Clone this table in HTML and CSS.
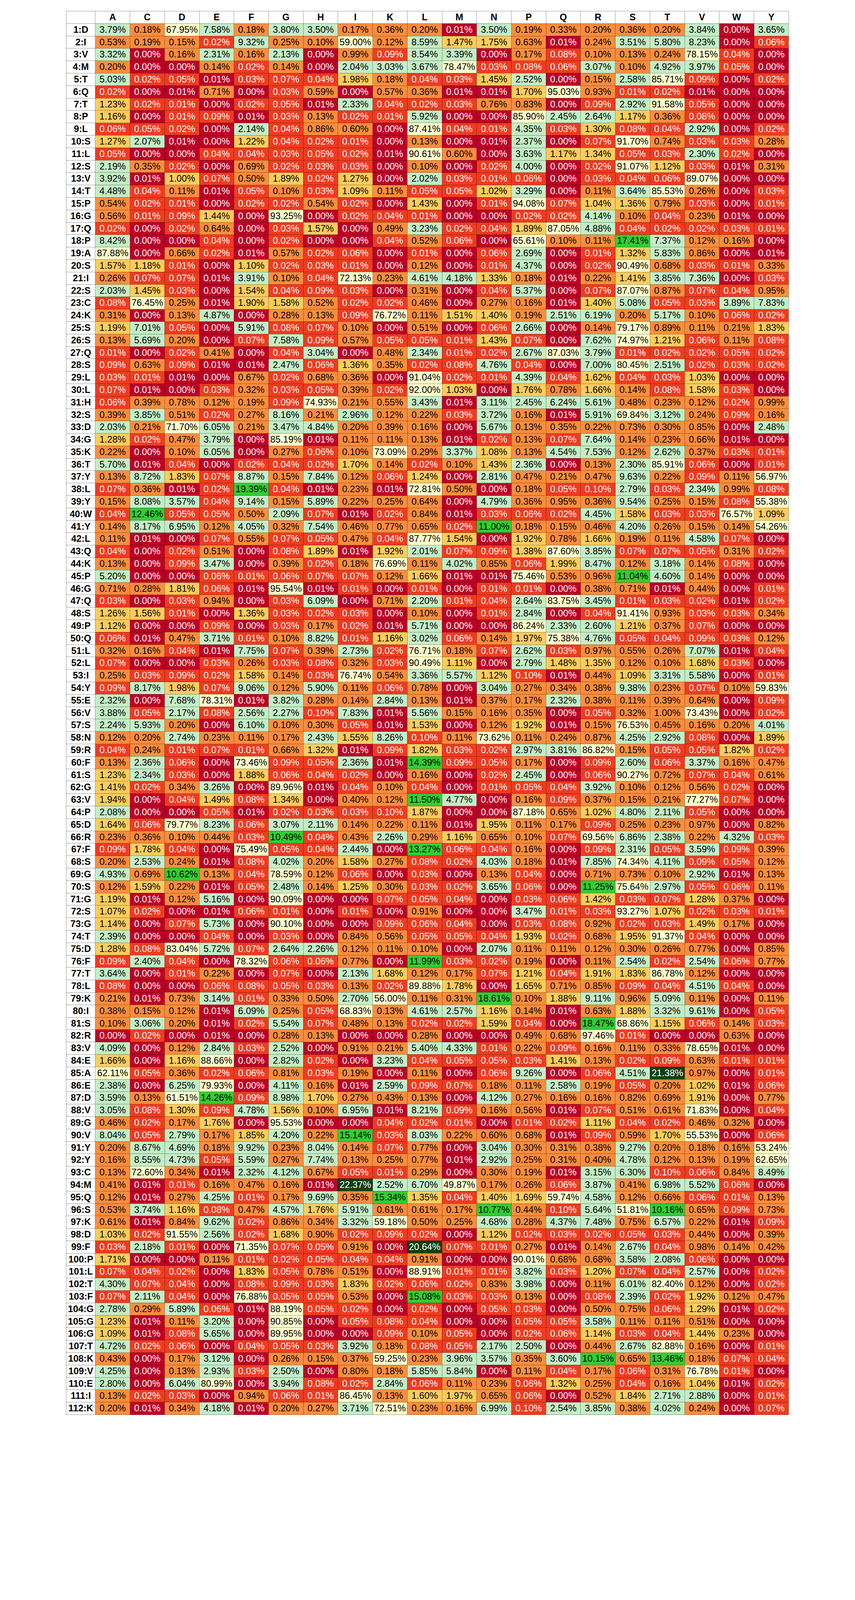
FILE: index.html
```html
<!DOCTYPE html>
<html lang="en">
<head>
<meta charset="utf-8">
<title>Residue substitution frequencies</title>
<link rel="stylesheet" href="styles.css">
</head>
<body>
<main class="page">
  <table class="matrix">
    <thead>
      <tr>
        <th class="corner"></th>
        <th>A</th><th>C</th><th>D</th><th>E</th><th>F</th><th>G</th><th>H</th><th>I</th><th>K</th><th>L</th>
        <th>M</th><th>N</th><th>P</th><th>Q</th><th>R</th><th>S</th><th>T</th><th>V</th><th>W</th><th>Y</th>
      </tr>
    </thead>
    <tbody id="rows"></tbody>
  </table>
</main>
<script src="script.js"></script>
</body>
</html>
```

FILE: styles.css
```css
html, body {
  margin: 0;
  padding: 0;
  background: #ffffff;
}

.page {
  padding: 28px 0 40px;
  font-family: "Liberation Sans", Arial, "DejaVu Sans", sans-serif;
  color: #000;
}

.matrix {
  border-collapse: collapse;
  margin: 0 auto;
  font-size: 23.8px;
  background: #ffffff;
}

.matrix th,
.matrix td {
  border: 1px solid rgba(0, 0, 0, 0.42);
  padding: 0 3.5px;
  line-height: 30.8px;
  text-align: center;
  white-space: nowrap;
}

.matrix th {
  font-weight: bold;
  background: #ffffff;
}

.matrix td.c0 { background: #bd0026; color: #ffffff; }
.matrix td.c1 { background: #f03b20; color: #ffffff; }
.matrix td.c2 { background: #fd8d3c; color: #000000; }
.matrix td.c3 { background: #fecc5c; color: #000000; }
.matrix td.c4 { background: #c3edc5; color: #000000; }
.matrix td.c5 { background: #32cd32; color: #000000; }
.matrix td.c6 { background: #10400f; color: #ffffff; }
.matrix td.cw { background: #ffffcc; color: #000000; }
```

FILE: script.js
```js
(function () {
  var cols = "ACDEFGHIKLMNPQRSTVWY".split("");
  var data = [
"1:D 3.79 0.18 67.95 7.58 0.18 3.80 3.50 0.17 0.36 0.20 0.01* 3.50 0.19 0.33 0.20 0.36 0.20 3.84 0.00 3.65",
"2:I 0.53 0.19 0.15 0.02 9.32 0.25 0.10 59.00 0.12 8.59 1.47 1.75 0.63 0.01* 0.24 3.51 5.80 8.23 0.00 0.06",
"3:V 3.32 0.00 0.16 2.31 0.16 2.13 0.00 0.99 0.09 8.54 3.39 0.00 0.17 0.08 0.10 0.13 0.24 78.15 0.04 0.00",
"4:M 0.20 0.00 0.00 0.14 0.02 0.14 0.00 2.04 3.03 3.67 78.47 0.03 0.08 0.06 3.07 0.10 4.92 3.97 0.05 0.00",
"5:T 5.03 0.02 0.05 0.01* 0.03 0.07 0.04 1.98 0.18 0.04 0.03 1.45 2.52 0.00 0.15 2.58 85.71 0.09 0.00 0.02",
"6:Q 0.02 0.00 0.01* 0.71 0.00 0.03 0.59 0.00 0.57 0.36 0.01* 0.01* 1.70 95.03 0.93 0.01 0.02 0.01* 0.00 0.00",
"7:T 1.23 0.02 0.01 0.00 0.02 0.05 0.01* 2.33 0.04 0.02 0.03 0.76 0.83 0.00 0.09 2.92 91.58 0.05 0.00 0.00",
"8:P 1.16 0.00 0.01 0.09 0.01* 0.03 0.13 0.02 0.01 5.92 0.00 0.00 85.90 2.45 2.64 1.17 0.36 0.08 0.00 0.00",
"9:L 0.06 0.05 0.02 0.00 2.14 0.04 0.86 0.60 0.00 87.41 0.04 0.01 4.35 0.03 1.30 0.08 0.04 2.92 0.00 0.02",
"10:S 1.27 2.07 0.01* 0.00 1.22 0.04 0.02 0.01 0.00 0.13 0.00 0.01* 2.37 0.00 0.07 91.70 0.74 0.03 0.03 0.28",
"11:L 0.05 0.00 0.00 0.04 0.04 0.03 0.05 0.02 0.01* 90.61 0.60 0.00 3.63 1.17 1.34 0.05 0.03 2.30 0.02 0.00",
"12:S 2.19 0.35 0.02 0.00 0.69 0.02 0.03 0.03 0.00 0.10 0.00 0.02 4.00 0.00 0.02 91.07 1.12 0.03 0.01* 0.31",
"13:V 3.92 0.01* 1.00 0.07 0.50 1.89 0.02 1.27 0.00 2.02 0.03 0.01 0.06 0.00 0.03 0.04 0.06 89.07 0.00 0.00",
"14:T 4.48 0.04 0.11 0.01* 0.05 0.10 0.03 1.09 0.11 0.05 0.05 1.02 3.29 0.00 0.11 3.64 85.53 0.26 0.00 0.03",
"15:P 0.54 0.02 0.01 0.00 0.02 0.02 0.54 0.02 0.00 1.43 0.00 0.01 94.08 0.07 1.04 1.36 0.79 0.03 0.00 0.01",
"16:G 0.56 0.01 0.09 1.44 0.00 93.25 0.00 0.02 0.04 0.01 0.00 0.00 0.02 0.02 4.14 0.10 0.04 0.23 0.01* 0.00",
"17:Q 0.02 0.00 0.02 0.64 0.00 0.03 1.57 0.00 0.49 3.23 0.02 0.04 1.89 87.05 4.88 0.04 0.02 0.02 0.03 0.01",
"18:P 8.42 0.00 0.00 0.04 0.00 0.02 0.00 0.00 0.04 0.52 0.06 0.00 65.61 0.10 0.11 17.41 7.37 0.12 0.16 0.00",
"19:A 87.88 0.00 0.66 0.02 0.01* 0.57 0.02 0.06 0.00 0.01 0.00 0.06 2.69 0.00 0.01 1.32 5.83 0.86 0.00 0.01*",
"20:S 1.57 1.18 0.01 0.00 1.10 0.02 0.03 0.01 0.00 0.12 0.00 0.01 4.37 0.00 0.02 90.49 0.68 0.03 0.01 0.33",
"21:I 0.26 0.07 0.07 0.01* 3.91 0.10 0.04 72.13 0.23 4.61 4.18 1.33 0.18 0.01* 0.22 1.41 3.85 7.36 0.00 0.03",
"22:S 2.03 1.45 0.03 0.00 1.54 0.04 0.09 0.03 0.00 0.31 0.00 0.04 5.37 0.00 0.07 87.07 0.87 0.07 0.04 0.95",
"23:C 0.08 76.45 0.25 0.01* 1.90 1.58 0.52 0.02 0.02 0.46 0.00 0.27 0.16 0.01* 1.40 5.08 0.05 0.03 3.89 7.83",
"24:K 0.31 0.00 0.13 4.87 0.00 0.28 0.13 0.09 76.72 0.11 1.51 1.40 0.19 2.51 6.19 0.20 5.17 0.10 0.06 0.02",
"25:S 1.19 7.01 0.05 0.00 5.91 0.08 0.07 0.10 0.00 0.51 0.00 0.06 2.66 0.00 0.14 79.17 0.89 0.11 0.21 1.83",
"26:S 0.13 5.69 0.20 0.00 0.07 7.58 0.09 0.57 0.05 0.05 0.01 1.43 0.07 0.00 7.62 74.97 1.21 0.06 0.11 0.08",
"27:Q 0.01 0.00 0.02 0.41 0.00 0.04 3.04 0.00 0.48 2.34 0.01 0.02 2.67 87.03 3.79 0.01 0.02 0.02 0.05 0.02",
"28:S 0.09 0.63 0.09 0.01* 0.01* 2.47 0.06 1.36 0.35 0.02 0.08 4.76 0.04 0.00 7.00 80.45 2.51 0.02 0.03 0.02",
"29:L 0.03 0.01 0.01* 0.00 0.67 0.02 0.68 0.36 0.00 91.04 0.02 0.01 4.39 0.04 1.62 0.04 0.03 1.03 0.00 0.00",
"30:L 0.07 0.01* 0.00 0.03 0.32 0.03 0.05 0.39 0.02 92.00 1.03 0.00 1.76 0.78 1.66 0.14 0.08 1.58 0.03 0.00",
"31:H 0.06 0.39 0.78 0.12 0.19 0.09 74.93 0.21 0.55 3.43 0.01* 3.11 2.45 6.24 5.61 0.48 0.23 0.12 0.02 0.99",
"32:S 0.39 3.85 0.51 0.02 0.27 8.16 0.21 2.96 0.12 0.22 0.03 3.72 0.16 0.01* 5.91 69.84 3.12 0.24 0.09 0.16",
"33:D 2.03 0.21 71.70 6.05 0.21 3.47 4.84 0.20 0.39 0.16 0.00 5.67 0.13 0.35 0.22 0.73 0.30 0.85 0.00 2.48",
"34:G 1.28 0.02 0.47 3.79 0.00 85.19 0.01* 0.11 0.11 0.13 0.01* 0.02 0.13 0.07 7.64 0.14 0.23 0.66 0.01* 0.00",
"35:K 0.22 0.00 0.10 6.05 0.00 0.27 0.06 0.10 73.09 0.29 3.37 1.08 0.13 4.54 7.53 0.12 2.62 0.37 0.03 0.01",
"36:T 5.70 0.01* 0.04 0.00 0.02 0.04 0.02 1.70 0.14 0.02 0.10 1.43 2.36 0.00 0.13 2.30 85.91 0.06 0.00 0.01",
"37:Y 0.13 8.72 1.83 0.07 8.87 0.15 7.84 0.12 0.06 1.24 0.00 2.81 0.47 0.21 0.47 9.63 0.22 0.09 0.11 56.97",
"38:L 0.07 0.36 0.01* 0.02 19.39 0.04 0.01* 0.23 0.01* 72.81 0.50 0.00 0.18 0.05 0.10* 2.79 0.03 2.34 0.99 0.08",
"39:Y 0.15 8.08 3.57 0.04 9.14 0.15 5.89 0.22 0.25 0.64 0.00 4.79 0.36 0.95 0.36 9.54 0.25 0.15 0.08 55.38",
"40:W 0.04 12.46 0.05 0.05 0.50 2.09 0.07 0.01* 0.02 0.84 0.01* 0.03 0.06 0.02 4.45 1.58 0.03 0.03 76.57 1.09",
"41:Y 0.14 8.17 6.95 0.12 4.05 0.32 7.54 0.46 0.77 0.65 0.02 11.00 0.18 0.15 0.46 4.20 0.26 0.15 0.14 54.26",
"42:L 0.11 0.01* 0.00 0.07 0.55 0.07 0.05 0.47 0.04 87.77 1.54 0.00 1.92 0.78 1.66 0.19 0.11 4.58 0.07 0.00",
"43:Q 0.04 0.00 0.02 0.51 0.00 0.08 1.89 0.01* 1.92 2.01 0.07 0.09 1.38 87.60 3.85 0.07 0.07 0.05 0.31 0.02",
"44:K 0.13 0.00 0.09 3.47 0.00 0.39 0.02 0.18 76.69 0.11 4.02 0.85 0.06 1.99 8.47 0.12 3.18 0.14 0.08 0.00",
"45:P 5.20 0.00 0.00 0.06 0.01 0.06 0.07 0.07 0.12 1.66 0.01* 0.01* 75.46 0.53 0.96 11.04 4.60 0.14 0.00 0.00",
"46:G 0.71 0.28 1.81 0.06 0.01* 95.54 0.01* 0.01 0.00 0.01 0.00 0.01 0.01 0.00 0.38 0.71 0.01* 0.44 0.00 0.01",
"47:Q 0.03 0.00 0.03 0.94 0.00 0.03 6.09 0.00 0.71 2.20 0.01 0.04 2.64 83.75 3.45 0.01 0.03 0.02 0.01* 0.02",
"48:S 1.26 1.56 0.01 0.00 1.36 0.03 0.02 0.03 0.00 0.10 0.00 0.01 2.84 0.00 0.04 91.41 0.93 0.03 0.03 0.34",
"49:P 1.12 0.00 0.00 0.09 0.00 0.03 0.17 0.02 0.01* 5.71 0.00 0.00 86.24 2.33 2.60 1.21 0.37 0.07 0.00 0.00",
"50:Q 0.06 0.01* 0.47 3.71 0.01 0.10 8.82 0.01 1.16 3.02 0.06 0.14 1.97 75.38 4.76 0.05 0.04 0.09 0.03 0.12",
"51:L 0.32 0.16 0.04 0.01* 7.75 0.07 0.39 2.73 0.02 76.71 0.18 0.07 2.62 0.03 0.97 0.55 0.26 7.07 0.01* 0.04",
"52:L 0.07 0.00 0.00 0.03 0.26 0.03 0.08 0.32 0.03 90.49 1.11 0.00 2.79 1.48 1.35 0.12 0.10 1.68 0.03 0.00",
"53:I 0.25 0.03 0.09 0.02 1.58 0.14 0.03 76.74 0.54 3.36 5.57 1.12 0.10* 0.01* 0.44 1.09 3.31 5.58 0.00 0.01",
"54:Y 0.09 8.17 1.98 0.07 9.06 0.12 5.90 0.11 0.06 0.78 0.00 3.04 0.27 0.34 0.38 9.38 0.23 0.07 0.10 59.83",
"55:E 2.32 0.00 7.68 78.31 0.01* 3.82 0.28 0.14 2.84 0.13 0.01* 0.37 0.17 2.32 0.38 0.11 0.39 0.64 0.00 0.09",
"56:V 3.88 0.05 2.17 0.08 2.56 2.27 0.10* 7.83 0.01* 5.56 0.15 0.16 0.35 0.00 0.05 0.32 1.00* 73.43 0.00 0.02",
"57:S 2.24 5.93 0.20 0.00 6.10 0.10 0.30 0.05 0.01* 1.53 0.00 0.12 1.92 0.01* 0.15 76.53 0.45 0.16 0.20 4.01",
"58:N 0.12 0.20 2.74 0.23 0.11 0.17 2.43 1.55 8.26 0.10* 0.11 73.62 0.11 0.24 0.87 4.25 2.92 0.08 0.00 1.89",
"59:R 0.04 0.24 0.01 0.07 0.01 0.66 1.32 0.01* 0.09 1.82 0.03 0.02 2.97 3.81 86.82 0.15 0.05 0.05 1.82 0.02",
"60:F 0.13 2.36 0.06 0.00 73.46 0.09 0.05 2.36 0.01* 14.39 0.09 0.05 0.17 0.00 0.09 2.60 0.06 3.37 0.16 0.47",
"61:S 1.23 2.34 0.03 0.00 1.88 0.06 0.04 0.02 0.00 0.16 0.00 0.02 2.45 0.00 0.06 90.27 0.72 0.07 0.04 0.61",
"62:G 1.41 0.02 0.34 3.26 0.00 89.96 0.01* 0.04 0.10 0.04 0.00 0.01 0.05 0.04 3.92 0.10 0.12 0.56 0.02 0.00",
"63:V 1.94 0.00 0.04 1.49 0.08 1.34 0.00 0.40 0.12 11.50 4.77 0.00 0.16 0.09 0.37 0.15 0.21 77.27 0.07 0.00",
"64:P 2.08 0.00 0.00 0.05 0.01* 0.02 0.03 0.03 0.10* 1.87 0.00 0.00 87.18 0.65 1.02 4.80 2.11 0.05 0.00 0.00",
"65:D 1.64 0.06 79.77 8.23 0.06 3.07 2.11 0.14 0.22 0.11 0.01* 1.95 0.11 0.17 0.09 0.25 0.23 0.97 0.00 0.82",
"66:R 0.23 0.36 0.10 0.44 0.03 10.49 0.04 0.43 2.26 0.29 1.16 0.65 0.10 0.07 69.56 6.86 2.38 0.22 4.32 0.03",
"67:F 0.09 1.78 0.04 0.00 75.49 0.05 0.04 2.44 0.00 13.27 0.06 0.04 0.16 0.00 0.09 2.31 0.05 3.59 0.09 0.39",
"68:S 0.20 2.53 0.24 0.01* 0.08 4.02 0.20 1.58 0.27 0.08 0.02 4.03 0.18 0.01* 7.85 74.34 4.11 0.09 0.05 0.12",
"69:G 4.93 0.69 10.62 0.13 0.04 78.59 0.12 0.06 0.00 0.03 0.00 0.13 0.04 0.00 0.71 0.73 0.10 2.92 0.01* 0.13",
"70:S 0.12 1.59 0.22 0.01* 0.05 2.48 0.14 1.25 0.30 0.03 0.02 3.65 0.06 0.00 11.25 75.64 2.97 0.05 0.06 0.11",
"71:G 1.19 0.01* 0.12 5.16 0.00 90.09 0.00 0.00 0.07 0.05 0.04 0.00 0.03 0.06 1.42 0.03 0.07 1.28 0.37 0.00",
"72:S 1.07 0.02 0.00 0.01* 0.06 0.01 0.00 0.01 0.00 0.91 0.00 0.00 3.47 0.01 0.03 93.27 1.07 0.02 0.03 0.01",
"73:G 1.14 0.00 0.07 5.73 0.00 90.10 0.00 0.00 0.09 0.06 0.04 0.00 0.03 0.08 0.92 0.02 0.03 1.49 0.17 0.00",
"74:T 2.39 0.00 0.00 0.04 0.00 0.03 0.00 0.84 0.56 0.05 0.05 0.04 1.93 0.02 0.68 1.95 91.37 0.04 0.00 0.00",
"75:D 1.28 0.08 83.04 5.72 0.07 2.64 2.26 0.12 0.11 0.10 0.00 2.07 0.11 0.11 0.12 0.30 0.26 0.77 0.00 0.85",
"76:F 0.09 2.40 0.04 0.00 78.32 0.06 0.06 0.77 0.00 11.99 0.03 0.02 0.19 0.00 0.11 2.54 0.02 2.54 0.06 0.77",
"77:T 3.64 0.00 0.01 0.22 0.00 0.07 0.00 2.13 1.68 0.12 0.17 0.07 1.21 0.04 1.91 1.83 86.78 0.12 0.00 0.00",
"78:L 0.08 0.00 0.00 0.06 0.08 0.05 0.03 0.13 0.02 89.88 1.78 0.00 1.65 0.71 0.85 0.09 0.04 4.51 0.04 0.00",
"79:K 0.21 0.01* 0.73 3.14 0.01 0.33 0.50 2.70 56.00 0.11 0.31 18.61 0.10 1.88 9.11 0.96 5.09 0.11 0.00 0.11",
"80:I 0.38 0.15 0.12 0.01* 6.09 0.25 0.05 68.83 0.13 4.61 2.57 1.16 0.14 0.01* 0.63 1.88 3.32 9.61 0.00 0.05",
"81:S 0.10 3.06 0.20 0.01* 0.02 5.54 0.07 0.48 0.13 0.02 0.02 1.59 0.04 0.00 18.47 68.86 1.15 0.06 0.14 0.03",
"82:R 0.00 0.02 0.00 0.01* 0.00 0.28 0.13 0.00 0.00 0.28 0.00 0.00 0.49 0.68 97.46 0.01 0.00 0.00 0.63 0.00",
"83:V 4.09 0.00 0.12 2.84 0.03 2.52 0.00 0.91 0.21 5.40 4.33 0.01 0.22 0.09 0.16 0.11 0.33 78.65 0.01* 0.00",
"84:E 1.66 0.00 1.16 88.66 0.00 2.82 0.02 0.00 3.23 0.04 0.05 0.05 0.03 1.41 0.13 0.02 0.09 0.63 0.01 0.01",
"85:A 62.11 0.05 0.36 0.02 0.06 0.81 0.03 0.19 0.00 0.11 0.00 0.06 9.26 0.00 0.06 4.51 21.38 0.97 0.00 0.01",
"86:E 2.38 0.00 6.25 79.93 0.00 4.11 0.16 0.01* 2.59 0.09 0.07 0.18 0.11 2.58 0.19 0.05 0.20 1.02 0.01* 0.06",
"87:D 3.59 0.13 61.51 14.26 0.09 8.98 1.70 0.27 0.43 0.13 0.00 4.12 0.27 0.16 0.16 0.82 0.69 1.91 0.00 0.77",
"88:V 3.05 0.08 1.30 0.09 4.78 1.56 0.10 6.95 0.01* 8.21 0.09 0.16 0.56 0.01* 0.07 0.51 0.61 71.83 0.00 0.04",
"89:G 0.46 0.02 0.17 1.76 0.00 95.53 0.00 0.00 0.04 0.02 0.01 0.00 0.01 0.02 1.11 0.04 0.02 0.46 0.32 0.00",
"90:V 8.04 0.05 2.79 0.17 1.85 4.20 0.22 15.14 0.03 8.03 0.22 0.60 0.68 0.01* 0.09 0.59 1.70 55.53 0.00 0.06",
"91:Y 0.20 8.67 4.69 0.18 9.92 0.23 8.04 0.14 0.07 0.77 0.00 3.04 0.30 0.31 0.38 9.27 0.20 0.18 0.16 53.24",
"92:Y 0.16 8.55 4.73 0.05 5.59 0.27 7.74 0.13 0.25 0.77 0.01* 2.92 0.25 0.31 0.40 4.78 0.12 0.13 0.19 62.65",
"93:C 0.13 72.60 0.34 0.01* 2.32 4.12 0.67 0.05 0.01 0.29 0.00 0.30 0.19 0.01* 3.15 6.30 0.10* 0.06 0.84 8.49",
"94:M 0.41 0.01* 0.01 0.16 0.47 0.16 0.01* 22.37 2.52 6.70 49.87 0.17 0.26 0.06 3.87 0.41 6.98 5.52 0.06 0.00",
"95:Q 0.12 0.01* 0.27 4.25 0.01 0.17 9.69 0.35 15.34 1.35 0.04 1.40 1.69 59.74 4.58 0.12 0.66 0.06 0.01 0.13",
"96:S 0.53 3.74 1.16 0.08 0.47 4.57 1.76 5.91 0.61 0.61 0.17 10.77 0.44 0.10* 5.64 51.81 10.16 0.65 0.09 0.73",
"97:K 0.61 0.01* 0.84 9.62 0.02 0.86 0.34 3.32 59.18 0.50 0.25 4.68 0.28 4.37 7.48 0.75 6.57 0.22 0.01* 0.09",
"98:D 1.03 0.02 91.55 2.56 0.02 1.68 0.90 0.02 0.09 0.02 0.00 1.12 0.02 0.03 0.02 0.05 0.03 0.44 0.00 0.39",
"99:F 0.03 2.18 0.01 0.00 71.35 0.07 0.05 0.91 0.00 20.64 0.07 0.01 0.27 0.01* 0.14 2.67 0.04 0.98 0.14 0.42",
"100:P 1.71 0.00 0.00 0.11 0.01 0.02 0.05 0.04 0.04 0.91 0.00 0.00 90.01 0.68 0.68 3.58 2.08 0.06 0.00 0.00",
"101:L 0.07 0.04 0.02 0.00 1.83 0.05 0.78 0.51 0.00 88.91 0.01 0.01 3.82 0.03 1.20 0.07 0.04 2.57 0.00 0.02",
"102:T 4.30 0.07 0.04 0.00 0.08 0.09 0.03 1.83 0.02 0.06 0.02 0.83 3.98 0.00 0.11 6.01 82.40 0.12 0.00 0.02",
"103:F 0.07 2.11 0.04 0.00 76.88 0.05 0.05 0.53 0.00 15.08 0.03 0.03 0.13 0.00 0.08 2.39 0.02 1.92 0.12 0.47",
"104:G 2.78 0.29 5.89 0.06 0.01* 88.19 0.05 0.02 0.00 0.02 0.00 0.05 0.03 0.00 0.50 0.75 0.06 1.29 0.01* 0.02",
"105:G 1.23 0.01* 0.11 3.20 0.00 90.85 0.00 0.05 0.08 0.04 0.00 0.00 0.05 0.05 3.58 0.11 0.11 0.51 0.00 0.00",
"106:G 1.09 0.01* 0.08 5.65 0.00 89.95 0.00 0.00 0.09 0.10 0.05 0.00 0.02 0.06 1.14 0.03 0.04 1.44 0.23 0.00",
"107:T 4.72 0.02 0.06 0.00 0.04 0.05 0.03 3.92 0.18 0.08 0.05 2.17 2.50 0.00 0.44 2.67 82.88 0.16 0.00 0.01",
"108:K 0.43 0.00 0.17 3.12 0.00 0.26 0.15 0.37 59.25 0.23 3.96 3.57 0.35 3.60 10.15 0.65 13.46 0.18 0.07 0.04",
"109:V 4.25 0.00 0.13 2.93 0.03 2.50 0.00 0.80 0.18 5.85 5.84 0.00 0.11 0.04 0.17 0.06 0.31 76.78 0.01 0.00",
"110:E 2.80 0.00 6.04 80.99 0.00 3.94 0.08 0.02 2.84 0.06 0.11 0.23 0.06 1.32 0.25 0.04 0.16 1.04 0.01* 0.02",
"111:I 0.13 0.02 0.03 0.00 0.94 0.06 0.01 86.45 0.13 1.60 1.97 0.65 0.06 0.00 0.52 1.84 2.71 2.88 0.00 0.01",
"112:K 0.20 0.01* 0.34 4.18 0.01* 0.20 0.27 3.71 72.51 0.23 0.16 6.99 0.10* 2.54 3.85 0.38 4.02 0.24 0.00 0.07"
  ];

  function bin(v) {
    if (v < 0.01) return 0;
    if (v < 0.1) return 1;
    if (v < 1) return 2;
    if (v < 2) return 3;
    if (v < 10) return 4;
    if (v < 20) return 5;
    return 6;
  }

  var body = document.getElementById("rows");
  var frag = document.createDocumentFragment();

  data.forEach(function (line) {
    var parts = line.split(" ");
    var label = parts[0];
    var wt = label.split(":")[1];
    var tr = document.createElement("tr");
    var th = document.createElement("th");
    th.className = "row-label";
    th.textContent = label;
    tr.appendChild(th);

    for (var i = 0; i < cols.length; i++) {
      var raw = parts[i + 1];
      var lower = raw.charAt(raw.length - 1) === "*";
      var txt = lower ? raw.slice(0, -1) : raw;
      var v = parseFloat(txt);
      var td = document.createElement("td");
      if (cols[i] === wt) {
        td.className = "cw";
      } else {
        var b = bin(v);
        if (lower && b > 0) b -= 1;
        td.className = "c" + b;
      }
      td.textContent = txt + "%";
      tr.appendChild(td);
    }
    frag.appendChild(tr);
  });

  body.appendChild(frag);
})();
```
